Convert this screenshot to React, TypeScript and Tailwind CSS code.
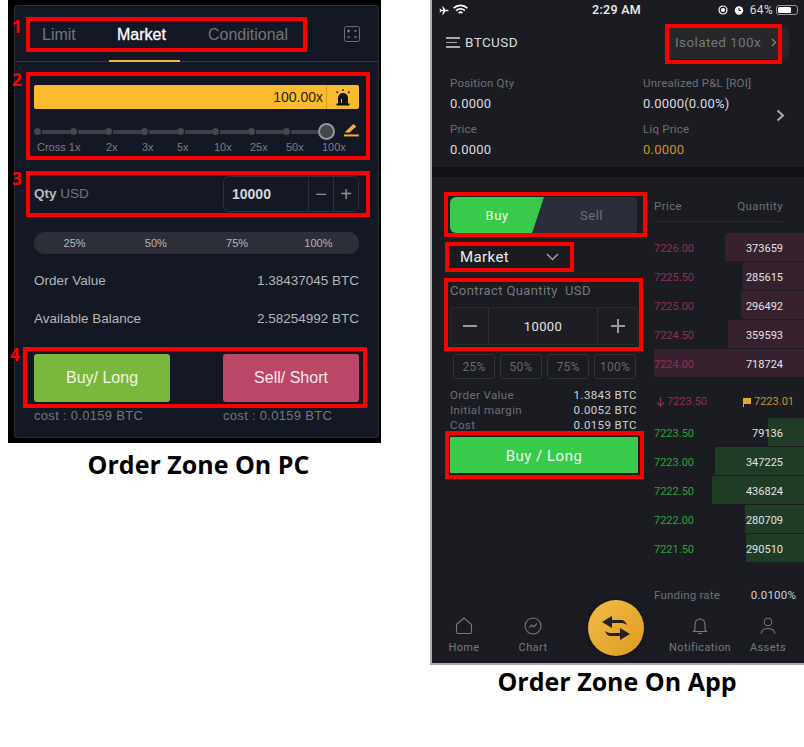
import React from "react";

const sans = "font-['Liberation_Sans',Arial,sans-serif]";
const din = "font-['Roboto','Liberation_Sans',sans-serif]";

function RedBox({ className }: { className: string }) {
  return <div className={`absolute border-[4px] border-[#fe0000] pointer-events-none ${className}`} />;
}

function Num({ children, className }: { children: React.ReactNode; className: string }) {
  return (
    <span className={`absolute font-['Open_Sans',sans-serif] font-bold text-[17px] leading-none text-[#fe0000] ${className}`}>
      {children}
    </span>
  );
}

const leverage = [
  { t: "Cross 1x", c: "w-[69px]" },
  { t: "2x", c: "w-[36px]" },
  { t: "3x", c: "w-[35px]" },
  { t: "5x", c: "w-[37px]" },
  { t: "10x", c: "w-[36px]" },
  { t: "25x", c: "w-[36px]" },
  { t: "50x", c: "w-[36px]" },
  { t: "100x", c: "w-[30px]" },
];

function PcPanel() {
  return (
    <div className={`relative w-[373px] h-[443px] bg-black pt-[5px] pl-[6px] pr-[2px] pb-[5px] ${sans}`}>
      <div className="w-full h-full bg-[#141824] border border-[#2a2d36] rounded-[3px] flex flex-col">
        {/* tabs */}
        <div className="relative h-[56px] shrink-0 border-b border-[#33363f] flex items-center pl-[27px] pr-[18px] pt-[3px] text-[16px] text-[#71757e]">
          <span className="w-[75px]">Limit</span>
          <span className="w-[91px] text-white font-medium [-webkit-text-stroke:0.3px_white]">Market</span>
          <span>Conditional</span>
          <svg className="ml-auto -mt-[3px]" width="16" height="16" viewBox="0 0 16 16" fill="none">
            <rect x="0.5" y="0.5" width="15" height="15" rx="2" stroke="#6d7079" />
            <path d="M3 5h3M4.500 3.500v3M10 5h3M3 11h3M10 11h3" stroke="#8a8d95" />
          </svg>
          <div className="absolute left-[94px] bottom-[-1px] w-[71px] h-[2px] bg-[#f8b62d]" />
        </div>

        <div className="flex flex-col pl-[19px] pr-[19px]">
          {/* leverage bar */}
          <div className="mt-[23px] h-[24px] bg-[#fcba2e] rounded-[2px] flex items-center justify-end text-[14px] text-[#2a1f08]">
            <span className="pr-[3px]">100.00x</span>
            <div className="w-[33px] h-full border-l border-[#d79c22] flex items-center justify-center">
              <svg width="16" height="17" viewBox="0 0 16 17">
                <path d="M3 15V9a5 5 0 0 1 10 0v6z" fill="#111" />
                <rect x="1.500" y="14.500" width="13" height="2" fill="#111" />
                <path d="M8 0v2M1.500 2.500l1.500 1.500M14.500 2.500L13 4" stroke="#111" strokeWidth="1.300" />
                <rect x="6" y="10" width="1" height="4" fill="#fcba2e" />
              </svg>
            </div>
          </div>

          {/* slider */}
          <div className="mt-[14px] h-[17px] flex items-center">
            {Array.from({ length: 8 }).map((_, i) => (
              <div key={i} className={`flex items-center ${i === 7 ? "w-[35px]" : "w-[36px]"}`}>
                <div className="w-[7px] h-[7px] rounded-full bg-[#45474d] shrink-0" />
                <div className="flex-1 h-[4px] bg-[#3e4046] ml-[1px]" />
              </div>
            ))}
            <div className="w-[17px] h-[17px] rounded-full bg-[#45464a] border-[2px] border-[#96979b] shrink-0" />
            <svg className="ml-[9px] -mt-[3px]" width="15" height="14" viewBox="0 0 15 14" fill="none">
              <path d="M0.500 9.500L9.500 1l3 2.500L5.500 9.500z" fill="#f4b227" />
              <rect x="0" y="11.500" width="15" height="2" fill="#f4b227" />
            </svg>
          </div>
          <div className="pl-[3px] flex text-[11px] leading-[14px] text-[#7a7d85] whitespace-nowrap">
            {leverage.map((l) => (
              <span key={l.t} className={l.c}>{l.t}</span>
            ))}
          </div>

          {/* qty */}
          <div className="mt-[22px] h-[36px] flex items-center justify-between">
            <span className="text-[13.500px] text-[#71757e]">
              <span className="text-[#b7bac0] font-bold">Qty</span> USD
            </span>
            <div className="w-[136px] h-full border border-[#2d3039] rounded-[6px] flex items-center text-[#8d9096]">
              <span className="flex-1 pl-[8px] text-[14px] font-bold text-[#d6d8db]">10000</span>
              <span className="w-[25px] h-full border-l border-[#2d3039] flex items-center justify-center text-[20px]">−</span>
              <span className="w-[25px] h-full border-l border-[#2d3039] flex items-center justify-center text-[20px]">+</span>
            </div>
          </div>

          {/* percent */}
          <div className="mt-[20px] h-[22px] rounded-full bg-[#2e2e39] grid grid-cols-4 items-center text-center text-[11px] text-[#b4b5ba]">
            <span>25%</span>
            <span>50%</span>
            <span>75%</span>
            <span>100%</span>
          </div>

          <div className="mt-[17px] h-[20px] flex justify-between items-center text-[13.500px] text-[#b3b6bb]">
            <span>Order Value</span>
            <span>1.38437045 BTC</span>
          </div>
          <div className="mt-[18px] h-[20px] flex justify-between items-center text-[13.500px] text-[#b3b6bb]">
            <span>Available Balance</span>
            <span>2.58254992 BTC</span>
          </div>

          {/* buttons */}
          <div className="mt-[25px] flex justify-between text-[16px]">
            <div className="w-[136px] h-[48px] rounded-[3px] bg-[#7ab73d] text-[#f1f5e4] flex items-center justify-center">Buy/ Long</div>
            <div className="w-[136px] h-[48px] rounded-[3px] bg-[#bb4768] text-[#f7e9ed] flex items-center justify-center">Sell/ Short</div>
          </div>
          <div className="mt-[6px] flex justify-between text-[13px] leading-[16px] text-[#74777f]">
            <span className="w-[136px] tracking-[0.3px]">cost : 0.0159 BTC</span>
            <span className="w-[136px] tracking-[0.3px]">cost : 0.0159 BTC</span>
          </div>
        </div>
      </div>

      <RedBox className="left-[18px] top-[17px] w-[281px] h-[35px]" />
      <RedBox className="left-[18px] top-[72px] w-[344px] h-[88px]" />
      <RedBox className="left-[18px] top-[171px] w-[344px] h-[46px]" />
      <RedBox className="left-[15px] top-[347px] w-[344px] h-[61px]" />
      <Num className="left-[4px] top-[18px]">1</Num>
      <Num className="left-[4px] top-[71px]">2</Num>
      <Num className="left-[4px] top-[170px]">3</Num>
      <Num className="left-[2px] top-[346px]">4</Num>
    </div>
  );
}

const asks = [
  { p: "7226.00", q: "373659", c: "w-[79px]" },
  { p: "7225.50", q: "285615", c: "w-[61px]" },
  { p: "7225.00", q: "296492", c: "w-[63px]" },
  { p: "7224.50", q: "359593", c: "w-[76px]" },
  { p: "7224.00", q: "718724", c: "w-[150px]" },
];
const bids = [
  { p: "7223.50", q: "79136", c: "w-[36px]" },
  { p: "7223.00", q: "347225", c: "w-[89px]" },
  { p: "7222.50", q: "436824", c: "w-[92px]" },
  { p: "7222.00", q: "280709", c: "w-[59px]" },
  { p: "7221.50", q: "290510", c: "w-[58px]" },
];

function BookRow({ p, q, c, ask }: { p: string; q: string; c: string; ask: boolean }) {
  return (
    <div className="relative h-[28px] mb-[1px] pt-[4px] flex items-center justify-between pr-[21px] text-[11px]">
      <div className={`absolute right-0 top-0 h-full ${c} ${ask ? "bg-[#37212f]" : "bg-[#203b26]"}`} />
      <span className={`relative ${ask ? "text-[#8f3055]" : "text-[#2ca33c]"}`}>{p}</span>
      <span className="relative text-[#e2e3e5]">{q}</span>
    </div>
  );
}

function Field({ a, b }: { a: string; b: string }) {
  return (
    <div className="flex flex-col">
      <span className="text-[11.500px] leading-[16px] tracking-[0.2px] text-[#6e7076]">{a}</span>
      <span className={`mt-[5px] text-[13px] leading-[16px] tracking-[0.2px] ${b === "Y" ? "text-[#c9922a]" : "text-[#dcdddf]"}`}>
        {b === "Y" ? "0.0000" : b}
      </span>
    </div>
  );
}

function NavItem({ label, w, children }: { label: string; w: string; children: React.ReactNode }) {
  return (
    <div className={`flex flex-col items-center ${w}`}>
      <div className="h-[20px] flex items-center">{children}</div>
      <span className="mt-[5px] text-[11px] leading-[14px] tracking-[0.4px] text-[#77797f]">{label}</span>
    </div>
  );
}

function AppPanel() {
  return (
    <div className={`relative w-[374px] h-[665px] bg-[#1a1c22] border-l-2 border-b-2 border-[#a9abae] flex flex-col ${din}`}>
      {/* status */}
      <div className="h-[20px] shrink-0 relative flex items-center pl-[6px] pr-[6px] text-white">
        <svg width="12" height="11" viewBox="0 0 24 24" fill="white">
          <path d="M22 12c0-1-1-1.500-2-1.500h-5L10 3H8l2.500 7.500H6L4 8H2l1.500 4L2 16h2l2-2.500h4.500L8 21h2l5-7.500h5c1 0 2-.5 2-1.500z" />
        </svg>
        <svg className="ml-[3px]" width="15" height="12" viewBox="0 0 24 18" fill="none" stroke="white" strokeWidth="2.600">
          <path d="M1 6c6-6 16-6 22 0M5 10c4-4 10-4 14 0M9 14c2-2 4-2 6 0" />
        </svg>
        <span className="absolute left-[160px] text-[12.500px] font-medium tracking-[0.3px] text-[#eee]">2:29 AM</span>
        <div className="ml-auto flex items-center gap-[6px]">
          <svg width="10" height="10" viewBox="0 0 10 10" fill="none" stroke="white" strokeWidth="1.200">
            <circle cx="5" cy="5" r="4" />
            <circle cx="5" cy="5" r="1.500" fill="white" />
          </svg>
          <svg width="10" height="10" viewBox="0 0 10 10">
            <circle cx="5" cy="5.500" r="4.200" fill="white" />
            <path d="M5 3v2.500h2" stroke="#1a1c22" fill="none" />
          </svg>
          <span className="text-[12px] tracking-[0.3px] text-[#ddd]">64%</span>
          <div className="-ml-[3px] w-[22px] h-[10px] border border-[#999] rounded-[3px] p-[1px]">
            <div className="w-[13px] h-full bg-white rounded-[1.500px]" />
          </div>
        </div>
      </div>

      {/* header */}
      <div className="h-[44px] shrink-0 flex items-center pl-[14px] pr-[15px]">
        <div className="w-[14px] flex flex-col gap-[3px] mr-[5px] mt-[1px]">
          <div className="h-[1.500px] bg-[#aaa]" />
          <div className="h-[1.500px] bg-[#aaa] w-[11px]" />
          <div className="h-[1.500px] bg-[#aaa]" />
        </div>
        <span className="text-[13.500px] tracking-[0.4px] text-[#dcdddf]">BTCUSD</span>
        <div className="ml-auto w-[122px] h-[33px] rounded-[8px] bg-[#26262b] flex items-center pl-[8px] text-[13.500px] tracking-[0.4px] text-[#75767b]">
          Isolated 100x
          <svg className="ml-[10px]" width="6" height="9" viewBox="0 0 6 9" fill="none" stroke="#888" strokeWidth="1.200">
            <path d="M1 1l3.500 3.500L1 8" />
          </svg>
        </div>
      </div>

      {/* position */}
      <div className="h-[103px] shrink-0 relative flex pl-[18px] pt-[11px]">
        <div className="w-[193px] flex flex-col gap-[9px]">
          <Field a="Position Qty" b="0.0000" />
          <Field a="Price" b="0.0000" />
        </div>
        <div className="flex flex-col gap-[9px]">
          <Field a="Unrealized P&L [ROI]" b="0.0000(0.00%)" />
          <Field a="Liq Price" b="Y" />
        </div>
        <svg className="absolute left-[344px] top-[45px]" width="9" height="13" viewBox="0 0 9 13" fill="none" stroke="#a9aaad" strokeWidth="2">
          <path d="M1.500 1.500L7 6.500l-5.500 5" />
        </svg>
      </div>

      <div className="h-[10px] shrink-0 bg-[#111215]" />

      {/* body */}
      <div className="flex-1 flex min-h-0">
        {/* left col */}
        <div className="w-[206px] shrink-0 pl-[18px] pt-[20px] flex flex-col">
          <div className="w-[187px] h-[36px] relative flex text-[13px] tracking-[0.5px]">
            <div className="w-[94px] h-full pt-[2px] bg-[#39ca4b] rounded-l-[6px] text-[#eafbe9] flex items-center justify-center [clip-path:polygon(0_0,100%_0,88%_100%,0_100%)]">Buy</div>
            <div className="absolute left-[82px] w-[105px] h-full pt-[2px] bg-[#2a2e3a] rounded-r-[4px] text-[#6c7079] flex items-center justify-center pl-[14px] [clip-path:polygon(12%_0,100%_0,100%_100%,0_100%)]">Sell</div>
          </div>
          <div className="mt-[12px] h-[24px] flex items-center pl-[10px] text-[15px] tracking-[0.4px] text-[#eceded]">
            Market
            <svg className="ml-[37px]" width="13" height="8" viewBox="0 0 13 8" fill="none" stroke="#9c9da0" strokeWidth="1.500">
              <path d="M1 1l5.500 5.500L12 1" />
            </svg>
          </div>
          <div className="mt-[14px] text-[13px] leading-[16px] tracking-[0.4px] text-[#77797f] whitespace-pre">Contract Quantity  USD</div>
          <div className="mt-[8px] w-[188px] h-[38px] bg-[#1c1e24] border border-[#27292f] rounded-[3px] flex items-center text-[#d0d1d3]">
            <div className="w-[38px] h-full border-r border-[#2f3137] flex items-center justify-center">
              <div className="w-[14px] h-[2px] bg-[#999]" />
            </div>
            <div className="flex-1 pt-[1px] text-center text-[13px] tracking-[0.4px] text-[#e2e3e5]">10000</div>
            <div className="w-[40px] h-full border-l border-[#2f3137] relative flex items-center justify-center">
              <div className="w-[14px] h-[2px] bg-[#999]" />
              <div className="absolute w-[2px] h-[14px] bg-[#999]" />
            </div>
          </div>
          <div className="mt-[9px] ml-[3px] w-[183px] flex gap-[5px] text-[12px] tracking-[0.2px] text-[#66686e]">
            {["25%", "50%", "75%", "100%"].map((p) => (
              <div key={p} className="flex-1 h-[25px] border border-[#303238] rounded-[3px] flex items-center justify-center">{p}</div>
            ))}
          </div>
          <div className="mt-[9px] w-[187px] flex flex-col text-[11.500px] leading-[15px] tracking-[0.4px]">
            {[
              ["Order Value", "1.3843 BTC"],
              ["Initial margin", "0.0052 BTC"],
              ["Cost", "0.0159 BTC"],
            ].map(([a, b]) => (
              <div key={a} className="flex justify-between">
                <span className="text-[#6e7076]">{a}</span>
                <span className="text-[#d0d1d3]">{b}</span>
              </div>
            ))}
          </div>
          <div className="mt-[4px] w-[188px] h-[36px] pt-[2px] bg-[#39ca4b] text-[#eafbe9] text-[15px] tracking-[0.5px] flex items-center justify-center">Buy / Long</div>
        </div>

        {/* book */}
        <div className="flex-1 min-w-0 flex flex-col pl-[16px]">
          <div className="h-[45px] shrink-0 pt-[15px] mr-[21px] border-b border-[#2a2c32] flex justify-between items-center text-[11.500px] tracking-[0.4px] text-[#6e7076]">
            <span>Price</span>
            <span>Quantity</span>
          </div>
          <div className="mt-[11px]">
            {asks.map((a) => (
              <BookRow key={a.p} {...a} ask />
            ))}
          </div>
          <div className="h-[40px] shrink-0 flex items-center text-[11px] pt-[8px]">
            <svg className="ml-[2px] mr-[2px]" width="9" height="10" viewBox="0 0 9 10" fill="none" stroke="#8f3055" strokeWidth="1.200">
              <path d="M4.500 0v9M1 5.500L4.500 9 8 5.500" />
            </svg>
            <span className="text-[#8f3055]">7223.50</span>
            <svg className="ml-[36px] mr-[3px]" width="8" height="9" viewBox="0 0 8 9">
              <path d="M0 0h8v6H1v3H0z" fill="#e8a92a" />
            </svg>
            <span className="text-[#c9922a]">7223.01</span>
          </div>
          <div>
            {bids.map((b) => (
              <BookRow key={b.p} {...b} ask={false} />
            ))}
          </div>
          <div className="mt-[24px] mr-[8px] flex justify-between text-[11.500px] tracking-[0.2px]">
            <span className="text-[#6e7076]">Funding rate</span>
            <span className="text-[#d0d1d3]">0.0100%</span>
          </div>
        </div>
      </div>

      {/* nav */}
      <div className="h-[56px] shrink-0 relative flex items-start pt-[9px] pl-[10px]">
        <NavItem label="Home" w="w-[44px]">
          <svg width="18" height="18" viewBox="0 0 18 18" fill="none" stroke="#77797f" strokeWidth="1.100">
            <path d="M1.500 7.500L9 1l7.500 6.500V15a1.500 1.500 0 0 1-1.500 1.500H3A1.500 1.500 0 0 1 1.500 15z" />
          </svg>
        </NavItem>
        <NavItem label="Chart" w="w-[44px] ml-[25px]">
          <svg width="18" height="18" viewBox="0 0 18 18" fill="none" stroke="#77797f" strokeWidth="1.100">
            <circle cx="9" cy="9" r="8" />
            <path d="M5 11l2.500-3 2 2L13 6.500" />
          </svg>
        </NavItem>
        <NavItem label="Notification" w="w-[70px] ml-[110px]">
          <svg width="16" height="18" viewBox="0 0 16 18" fill="none" stroke="#77797f" strokeWidth="1.100">
            <path d="M3 13V7a5 5 0 0 1 10 0v6l1.500 1.500h-13zM6 16.500h4M8 1v1" />
          </svg>
        </NavItem>
        <NavItem label="Assets" w="w-[44px] ml-[11px]">
          <svg width="16" height="18" viewBox="0 0 16 18" fill="none" stroke="#77797f" strokeWidth="1.100">
            <circle cx="8" cy="5" r="3.800" />
            <path d="M1 16.500c1-4 4-5 7-5s6 1 7 5" />
          </svg>
        </NavItem>
        <div className="absolute left-[156px] -top-[7px] w-[56px] h-[56px] rounded-full bg-gradient-to-br from-[#f1bd47] to-[#dd9a1c] shadow-[0_0_6px_rgba(0,0,0,0.4)] flex items-center justify-center">
          <svg width="30" height="28" viewBox="0 0 30 28" fill="#26211a">
            <path d="M1 8l10-6v4h9c3 0 5 2 6 5-2-1.500-4-2-6-2h-9v5z" />
            <path d="M29 20l-10 6v-4h-9c-3 0-5-2-6-5 2 1.500 4 2 6 2h9v-5z" />
          </svg>
        </div>
      </div>

      <RedBox className="left-[233px] top-[24px] w-[117px] h-[40px]" />
      <RedBox className="left-[12px] top-[192px] w-[203px] h-[45px]" />
      <RedBox className="left-[13px] top-[242px] w-[129px] h-[30px]" />
      <RedBox className="left-[12px] top-[278px] w-[199px] h-[73px]" />
      <RedBox className="left-[13px] top-[431px] w-[199px] h-[48px]" />
    </div>
  );
}

function Caption({ children, className }: { children: React.ReactNode; className: string }) {
  return (
    <div className={`font-['Open_Sans','Noto_Sans',sans-serif] font-bold text-[25px] leading-[32px] text-black text-center ${className}`}>
      {children}
    </div>
  );
}

export default function App() {
  return (
    <div className="w-[804px] h-[747px] bg-white flex overflow-hidden">
      <div className="ml-[8px] w-[373px] shrink-0">
        <PcPanel />
        <Caption className="mt-[5px] -ml-[1px] w-[383px]">Order Zone On PC</Caption>
      </div>
      <div className="ml-[49px] w-[374px] shrink-0">
        <AppPanel />
        <Caption className="mt-[0px]">Order Zone On App</Caption>
      </div>
    </div>
  );
}
